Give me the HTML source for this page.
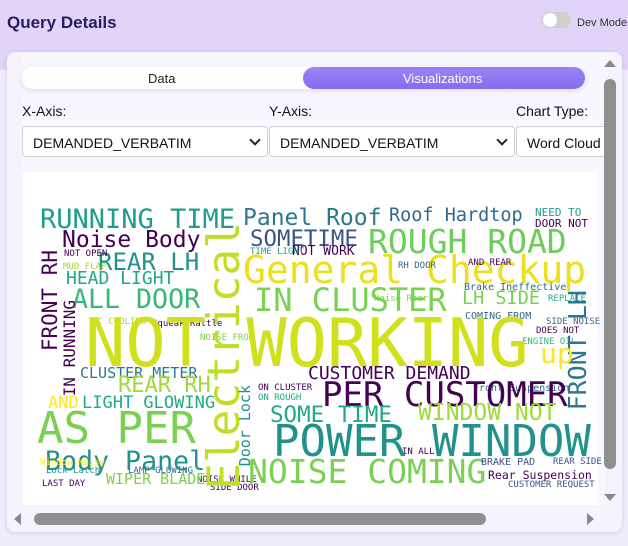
<!DOCTYPE html>
<html><head><style>
*{margin:0;padding:0;box-sizing:border-box}
body{width:628px;height:546px;background:#f1ecfd;font-family:"Liberation Sans",sans-serif;position:relative;overflow:hidden}
.top{position:absolute;left:0;top:0;width:628px;height:70px;background:#e2d4f8}
.title{position:absolute;left:7px;top:13px;font-size:17px;font-weight:bold;color:#2b1b60}
.tog{position:absolute;left:541px;top:12px;width:30px;height:16px;border-radius:8px;background:#cfcfcf}
.tog:after{content:"";position:absolute;left:2px;top:1px;width:14px;height:14px;border-radius:50%;background:#fff}
.dev{position:absolute;left:577px;top:17px;font-size:11px;color:#333}
.card{position:absolute;left:7px;top:52px;width:615px;height:480px;background:#f6f3fe;border-radius:8px;box-shadow:0 1px 4px rgba(80,60,140,.2);overflow:hidden}
.inner{position:absolute;left:15px;top:0;width:584px;height:453px;background:#f8f6fe}
.chart{position:absolute;left:15px;top:120px;width:576px;height:333px;background:#fff}
.pill{position:absolute;left:15px;top:15px;width:563px;height:22px;border-radius:11px;background:#fff;box-shadow:0 2px 6px rgba(120,100,200,.15);font-size:13px}
.pill span{position:absolute;top:4px}
.act{position:absolute;left:281px;top:0;width:282px;height:22px;border-radius:11px;background:linear-gradient(#9a84f3,#876cef)}
.lbl{position:absolute;top:51px;font-size:14px;color:#111}
.sel{position:absolute;top:74px;height:31px;border:1px solid #d0d0d0;border-radius:4px;background:#fff;font-size:14px;color:#111;padding:8px 0 0 10px;overflow:hidden;white-space:nowrap}
.chev{position:absolute;right:8px;top:9px;width:8px;height:8px;border-right:2px solid #222;border-bottom:2px solid #222;transform:rotate(45deg)}
.vs{position:absolute;left:596px;top:5px;width:14px;height:448px}
.hs{position:absolute;left:0;top:459px;width:596px;height:16px}
.w{position:absolute;font-family:"DejaVu Sans Mono",monospace;line-height:1;white-space:nowrap}
.s{font-size:9px}
.v{writing-mode:vertical-rl;transform:rotate(180deg)}
</style></head><body>
<div class="top"></div>
<div class="title">Query Details</div>
<div class="tog"></div>
<div class="dev">Dev Mode</div>
<div class="card">
 <div class="inner"></div>
 <div class="pill"><div class="act"></div><span style="left:126px;color:#222">Data</span><span style="left:381px;color:#fff">Visualizations</span></div>
 <div class="lbl" style="left:15px">X-Axis:</div>
 <div class="lbl" style="left:262px">Y-Axis:</div>
 <div class="lbl" style="left:509px">Chart Type:</div>
 <div class="sel" style="left:15px;width:246px">DEMANDED_VERBATIM<div class="chev"></div></div>
 <div class="sel" style="left:262px;width:246px">DEMANDED_VERBATIM<div class="chev"></div></div>
 <div class="sel" style="left:509px;width:90px;border-right:none;border-radius:4px 0 0 4px">Word Cloud</div>
 <div class="chart"></div>
 <svg class="vs" viewBox="0 0 14 448"><path d="M1 10 L7 3 L13 10Z" fill="#888"/><rect x="1" y="22" width="12" height="390" rx="6" fill="#8f8f8f"/><path d="M1 437 L13 437 L7 444Z" fill="#888"/></svg>
 <svg class="hs" viewBox="0 0 596 16"><path d="M14 2 L7 8 L14 14Z" fill="#888"/><rect x="27" y="2" width="452" height="12" rx="6" fill="#8f8f8f"/><path d="M580 2 L587 8 L580 14Z" fill="#888"/></svg>
</div>

<div class="w" style="left:40px;top:206px;font-size:27px;color:#1f9e89">RUNNING TIME</div>
<div class="w" style="left:243px;top:207px;font-size:23px;color:#2a788e">Panel Roof</div>
<div class="w" style="left:389px;top:207px;font-size:18.5px;color:#31688e">Roof Hardtop</div>
<div class="w" style="left:535px;top:207px;font-size:11px;color:#1f9e89">NEED TO</div>
<div class="w" style="left:535px;top:218px;font-size:11px;color:#440154">DOOR NOT</div>
<div class="w" style="left:62px;top:229px;font-size:23px;color:#440154">Noise Body</div>
<div class="w" style="left:250px;top:228px;font-size:22.4px;color:#3b528b">SOMETIME</div>
<div class="w" style="left:368px;top:225px;font-size:33px;color:#6ccd5a">ROUGH ROAD</div>
<div class="w" style="left:243px;top:251px;font-size:38px;color:#ecdf1f">General Checkup</div>
<div class="w" style="left:98px;top:250px;font-size:24px;color:#21918c">REAR LH</div>
<div class="w" style="left:66px;top:270px;font-size:18px;color:#22a884">HEAD LIGHT</div>
<div class="w" style="left:72px;top:287px;font-size:26.6px;color:#35b779">ALL DOOR</div>
<div class="w" style="left:254px;top:284px;font-size:32px;color:#7ad151">IN CLUSTER</div>
<div class="w" style="left:462px;top:290px;font-size:18.5px;color:#7ad151">LH SIDE</div>
<div class="w" style="left:464px;top:283px;font-size:10px;color:#31688e">Brake Ineffective</div>
<div class="w" style="left:465px;top:312px;font-size:10px;color:#31688e">COMING FROM</div>
<div class="w" style="left:292px;top:245px;font-size:13px;color:#440154">NOT WORK</div>
<div class="w s" style="left:250px;top:248px;color:#22a884">TIME LIGHT</div>
<div class="w s" style="left:468px;top:259px;color:#440154">AND REAR</div>
<div class="w s" style="left:398px;top:262px;color:#31688e">RH DOOR</div>
<div class="w s" style="left:64px;top:250px;color:#440154">NOT OPEN</div>
<div class="w s" style="left:63px;top:263px;color:#a0da39">MUD FLAP</div>
<div class="w s" style="left:92px;top:318px;color:#a0da39">AC COOLING</div>
<div class="w s" style="left:152px;top:320px;color:#440154">Squeak Rattle</div>
<div class="w s" style="left:200px;top:334px;color:#7ad151">NOISE FROM</div>
<div class="w s" style="left:374px;top:295px;color:#7ad151">Noise Rear</div>
<div class="w s" style="left:548px;top:295px;color:#22a884">REPLACE</div>
<div class="w s" style="left:546px;top:318px;color:#31688e">SIDE NOISE</div>
<div class="w s" style="left:536px;top:327px;color:#440154">DOES NOT</div>
<div class="w s" style="left:522px;top:338px;color:#35b779">ENGINE OIL</div>
<div class="w s" style="left:258px;top:384px;color:#440154">ON CLUSTER</div>
<div class="w s" style="left:258px;top:394px;color:#22a884">ON ROUGH</div>
<div class="w s" style="left:402px;top:448px;color:#440154">IN ALL</div>
<div class="w s" style="left:128px;top:467px;color:#31688e">LAMP GLOWING</div>
<div class="w s" style="left:197px;top:476px;color:#440154">NOISE WHILE</div>
<div class="w s" style="left:210px;top:484px;color:#440154">SIDE DOOR</div>
<div class="w s" style="left:508px;top:481px;color:#3b528b">CUSTOMER REQUEST</div>
<div class="w s" style="left:553px;top:458px;color:#3b528b">REAR SIDE</div>
<div class="w s" style="left:42px;top:480px;color:#440154">LAST DAY</div>
<div class="w s" style="left:46px;top:467px;color:#21918c">Lock Latch</div>
<div class="w" style="left:85px;top:310px;font-size:67px;color:#d0e11c">NOT WORKING</div>
<div class="w v" style="left:40px;top:250px;font-size:21px;color:#440154">FRONT RH</div>
<div class="w v" style="left:565px;top:290px;font-size:25px;color:#2a788e">FRONT LH</div>
<div class="w v" style="left:203px;top:222px;font-size:44.5px;color:#bddf26">Electrical</div>
<div class="w v" style="left:62px;top:300px;font-size:16px;color:#440154">IN RUNNING</div>
<div class="w v" style="left:238px;top:385px;font-size:15px;color:#21918c">Door Lock</div>
<div class="w" style="left:540px;top:340px;font-size:28px;color:#fde725">up</div>
<div class="w" style="left:80px;top:366px;font-size:15px;color:#2a788e">CLUSTER METER</div>
<div class="w" style="left:308px;top:365px;font-size:18px;color:#440154">CUSTOMER DEMAND</div>
<div class="w" style="left:473px;top:384px;font-size:10px;color:#31688e">Front Suspension</div>
<div class="w" style="left:322px;top:378px;font-size:34px;color:#440154">PER CUSTOMER</div>
<div class="w" style="left:118px;top:375px;font-size:22px;color:#a0da39">REAR RH</div>
<div class="w" style="left:48px;top:395px;font-size:17px;color:#fde725">AND</div>
<div class="w" style="left:82px;top:395px;font-size:17px;color:#22a884">LIGHT GLOWING</div>
<div class="w" style="left:37px;top:407px;font-size:44px;color:#7ad151">AS PER</div>
<div class="w" style="left:270px;top:404px;font-size:22.5px;color:#22a884">SOME TIME</div>
<div class="w" style="left:418px;top:402px;font-size:23px;color:#a0da39">WINDOW NOT</div>
<div class="w" style="left:273px;top:420px;font-size:44px;color:#21918c">POWER WINDOW</div>
<div class="w" style="left:45px;top:449px;font-size:26.6px;color:#21918c">Body Panel</div>
<div class="w" style="left:248px;top:455px;font-size:33px;color:#7ad151">NOISE COMING</div>
<div class="w" style="left:106px;top:472px;font-size:15px;color:#7ad151">WIPER BLADE</div>
<div class="w" style="left:488px;top:470px;font-size:11.5px;color:#440154">Rear Suspension</div>
<div class="w" style="left:481px;top:458px;font-size:10px;color:#3b528b">BRAKE PAD</div>
<div class="w" style="left:40px;top:459px;font-size:9px;color:#fde725">Window Noisy</div>
</body></html>
